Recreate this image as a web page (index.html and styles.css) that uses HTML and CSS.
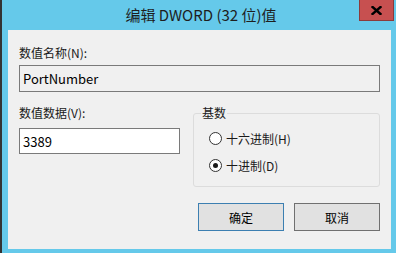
FILE: index.html
```html
<!DOCTYPE html>
<html lang="zh-CN">
<head>
    <meta charset="UTF-8">
    <meta name="viewport" content="width=device-width, initial-scale=1.0">
    <title>编辑 DWORD (32 位)值</title>
    <link rel="stylesheet" href="styles.css">
</head>
<body>
    <div class="window">
        <div class="titlebar">
            <span class="title">编辑 DWORD (32 位)值</span>
            <button class="close-btn" type="button" aria-label="关闭">
                <svg width="11" height="9" viewBox="0 0 11 9">
                    <path d="M1.5 1 L9.5 8 M9.5 1 L1.5 8" stroke="#000" stroke-width="2.4" stroke-linecap="square"/>
                </svg>
            </button>
        </div>
        <form class="panel">
            <label class="field-label" for="valueName">数值名称(N):</label>
            <input class="text-input readonly" type="text" id="valueName" value="PortNumber" readonly>

            <div class="data-row">
                <div class="data-col">
                    <label class="field-label" for="valueData">数值数据(V):</label>
                    <input class="text-input small" type="text" id="valueData" value="3389">
                </div>
                <fieldset class="base-group">
                    <legend>基数</legend>
                    <label class="radio"><input type="radio" name="base"><span class="dot"></span>十六进制(H)</label>
                    <label class="radio"><input type="radio" name="base" checked><span class="dot"></span>十进制(D)</label>
                </fieldset>
            </div>

            <div class="buttons">
                <button class="btn default" type="submit">确定</button>
                <button class="btn" type="button">取消</button>
            </div>
        </form>
    </div>
</body>
</html>
```

FILE: styles.css
```css
body {
    margin: 0;
    font-family: "Noto Sans CJK SC", "Noto Sans", sans-serif;
    font-size: 12px;
    color: #000;
}

.window {
    width: 394px;
    height: 253px;
    background-color: #65c9ea;
    border-left: 2px solid #333;
    display: flex;
    flex-direction: column;
}

.titlebar {
    position: relative;
    height: 30px;
    display: flex;
    justify-content: center;
    align-items: center;
}

.title {
    font-size: 15px;
    line-height: 20px;
    color: #1e1e1e;
    margin-left: 4px;
}

.close-btn {
    position: absolute;
    top: 0;
    right: 2px;
    width: 35px;
    height: 21px;
    padding: 0;
    background-color: #c75050;
    border: 1px solid #8c3b3b;
    border-top: none;
    display: flex;
    justify-content: center;
    align-items: center;
}

.panel {
    margin: 0 5px 4px 6px;
    flex: 1;
    background-color: #f0f0f0;
    padding: 15px 11px 0 11px;
    display: flex;
    flex-direction: column;
}

.field-label {
    display: block;
    line-height: 16px;
    color: #1a1a1a;
}

.text-input {
    box-sizing: border-box;
    width: 100%;
    height: 27px;
    margin: 4px 0 0 0;
    padding: 0 3px;
    border: 1px solid #7a7a7a;
    background-color: #fff;
    font-family: "Noto Sans CJK SC", "Noto Sans", sans-serif;
    font-size: 13px;
    color: #000;
    outline: none;
}

.text-input.readonly {
    background-color: #f0f0f0;
}

.text-input.small {
    height: 26px;
    margin-top: 7px;
}

.data-row {
    display: flex;
    align-items: flex-start;
    gap: 13px;
    margin-top: 13px;
}

.data-col {
    width: 162px;
}

.base-group {
    box-sizing: border-box;
    width: 188px;
    height: 82px;
    margin: 0;
    padding: 4px 0 0 15px;
    border: 1px solid #dcdcdc;
    border-radius: 3px;
}

.base-group legend {
    padding: 0 1px;
    margin-left: -8px;
    line-height: 16px;
    color: #1a1a1a;
}

.radio {
    display: flex;
    align-items: center;
    height: 27px;
    line-height: 16px;
    color: #1a1a1a;
}

.radio input {
    display: none;
}

.radio .dot {
    box-sizing: border-box;
    width: 13px;
    height: 13px;
    margin-right: 4px;
    border: 1px solid #333;
    border-radius: 50%;
    background-color: #fff;
    display: flex;
    justify-content: center;
    align-items: center;
}

.radio input:checked + .dot::after {
    content: "";
    width: 5px;
    height: 5px;
    border-radius: 50%;
    background-color: #1a1a1a;
}

.buttons {
    display: flex;
    justify-content: flex-end;
    gap: 10px;
    margin-top: 16px;
}

.btn {
    box-sizing: border-box;
    width: 86px;
    height: 28px;
    padding: 0;
    background-color: #e1e1e1;
    border: 1px solid #707070;
    font-family: "Noto Sans CJK SC", "Noto Sans", sans-serif;
    font-size: 12px;
    color: #000;
}

.btn.default {
    border-color: #3c7fb1;
}
```
